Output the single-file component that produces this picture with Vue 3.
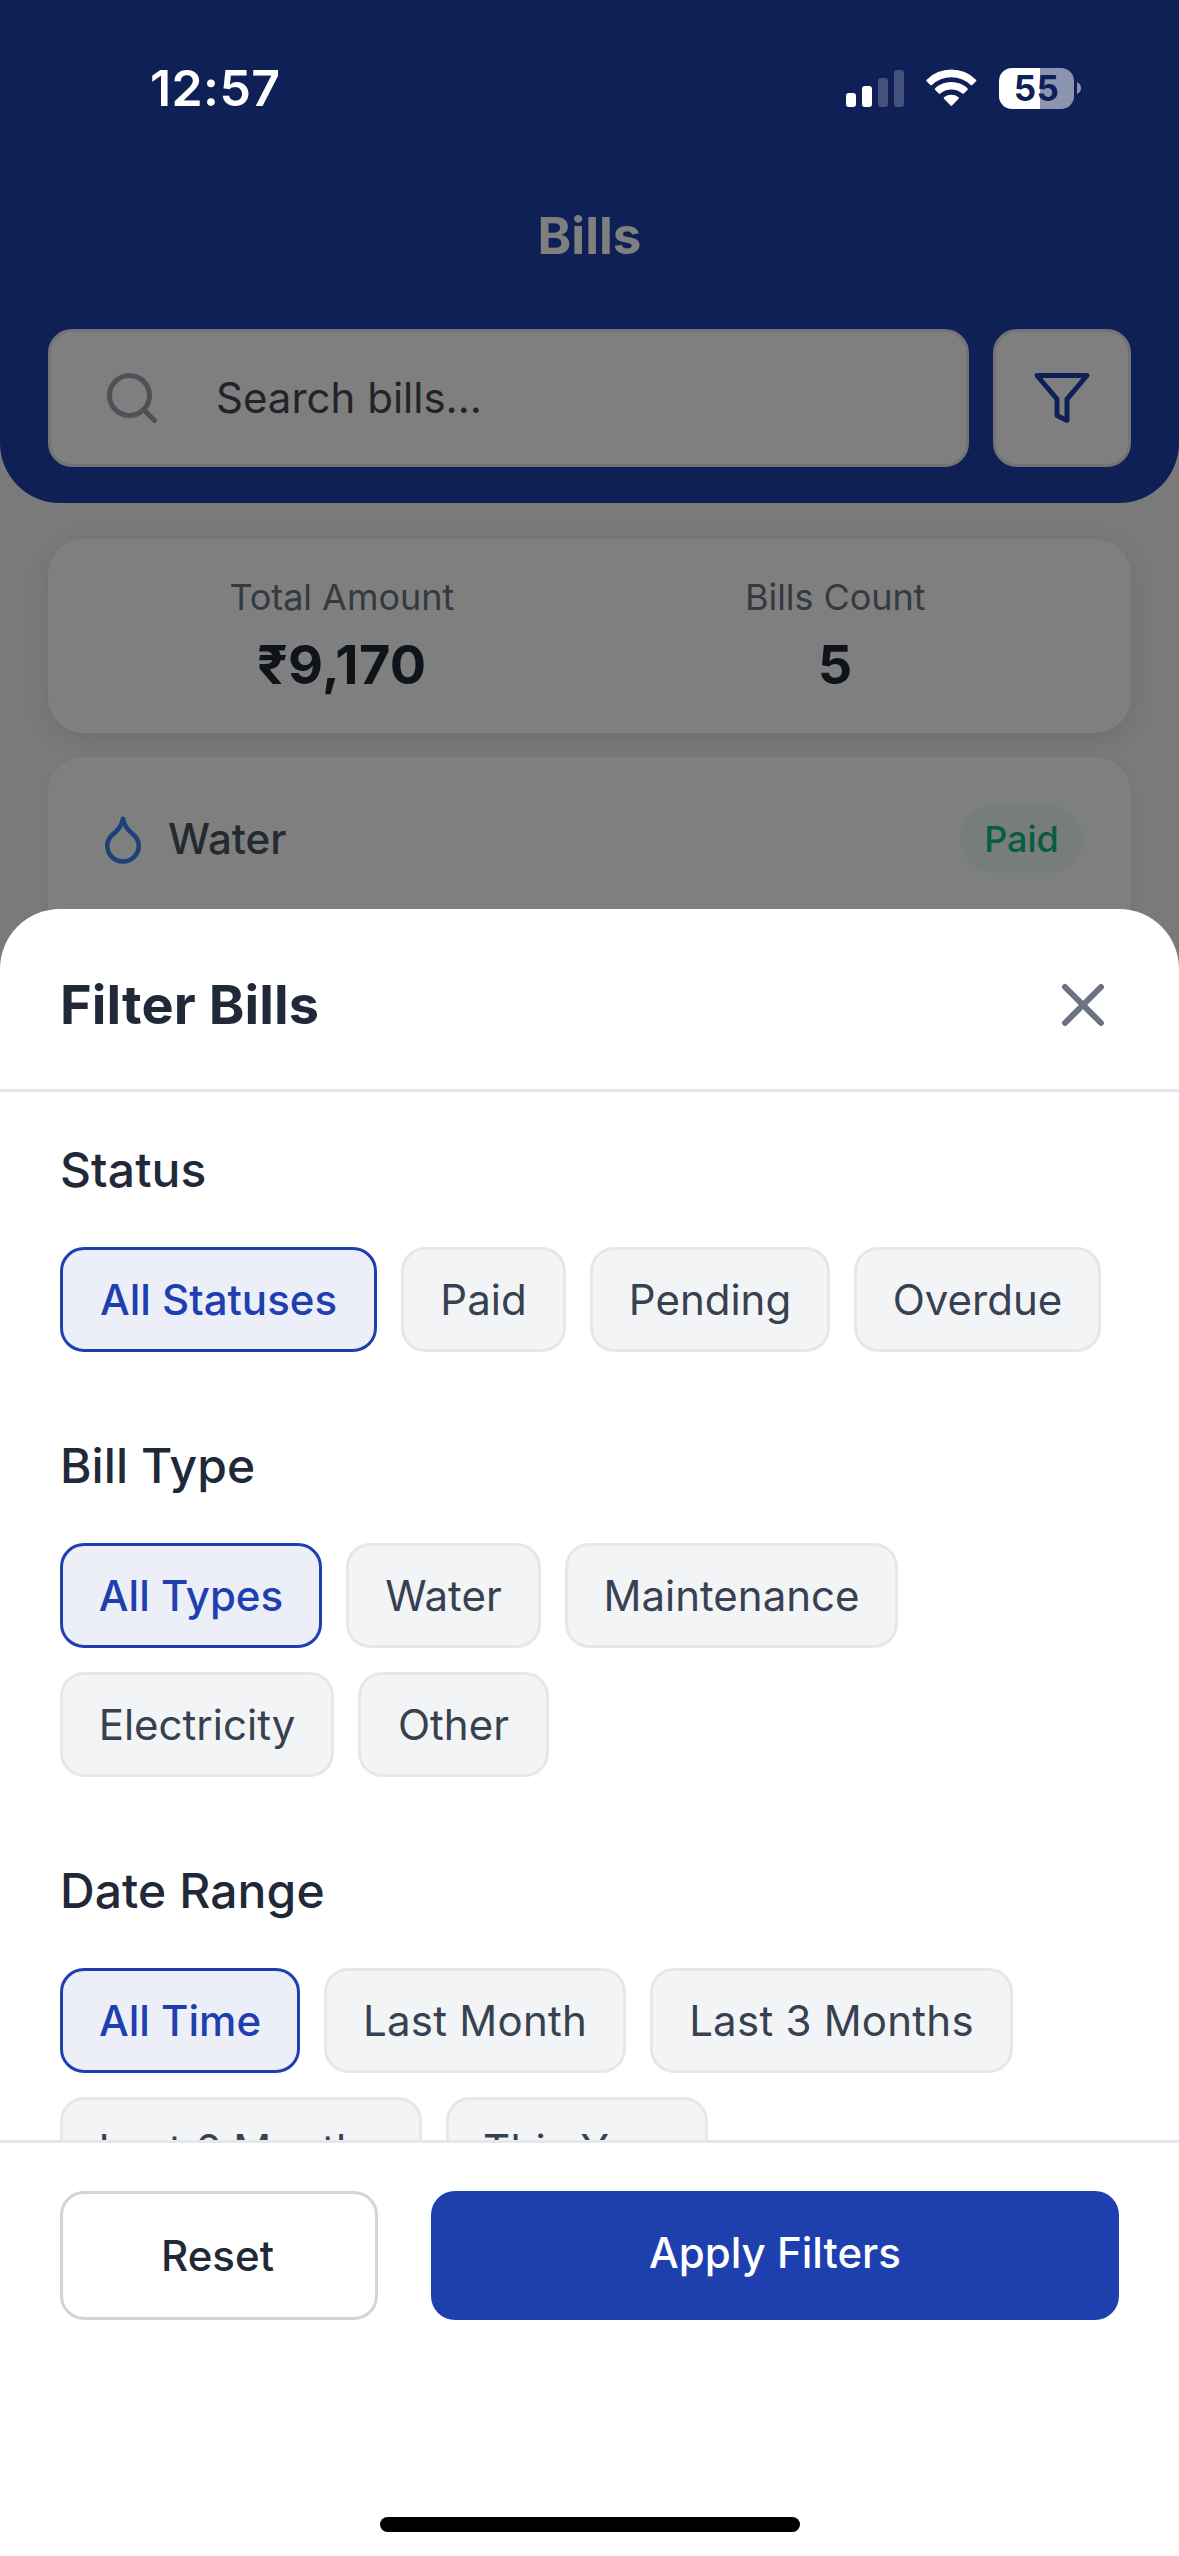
<script setup>
import { ref } from 'vue'

const groups = ref([
  {
    title: 'Status',
    selected: 'All Statuses',
    options: [
      { label: 'All Statuses', width: 317 },
      { label: 'Paid', width: 165 },
      { label: 'Pending', width: 240 },
      { label: 'Overdue', width: 247 },
    ],
  },
  {
    title: 'Bill Type',
    selected: 'All Types',
    options: [
      { label: 'All Types', width: 262 },
      { label: 'Water', width: 195 },
      { label: 'Maintenance', width: 333 },
      { label: 'Electricity', width: 274 },
      { label: 'Other', width: 191 },
    ],
  },
  {
    title: 'Date Range',
    selected: 'All Time',
    loose: true,
    options: [
      { label: 'All Time', width: 240 },
      { label: 'Last Month', width: 302 },
      { label: 'Last 3 Months', width: 363 },
      { label: 'Last 6 Months', width: 362 },
      { label: 'This Year', width: 262 },
    ],
  },
])

const summary = [
  { label: 'Total Amount', value: '₹9,170' },
  { label: 'Bills Count', value: '5' },
]
</script>

<template>
  <div class="screen">
    <div class="page">
      <header class="top">
        <h1 class="heading">Bills</h1>
        <div class="search-row">
          <div class="search">
            <svg class="search-icon" viewBox="0 0 24 24">
              <circle cx="11" cy="11" r="8" />
              <path d="M21 21l-4.35-4.35" />
            </svg>
            <span class="placeholder">Search bills...</span>
          </div>
          <button class="filter-button">
            <svg class="filter-icon" viewBox="0 0 24 24">
              <path d="M22 3H2l8 9.46V19l4 2v-8.54L22 3z" />
            </svg>
          </button>
        </div>
      </header>

      <section class="card summary">
        <div v-for="item in summary" :key="item.label" class="metric">
          <span class="metric-label">{{ item.label }}</span>
          <span class="metric-value">{{ item.value }}</span>
        </div>
      </section>

      <section class="card bill">
        <svg class="drop-icon" viewBox="0 0 24 24">
          <path d="M12 22a7 7 0 0 0 7-7c0-2-1-3.9-3-5.5s-3.5-4-4-6.5c-.5 2.5-2 4.9-4 6.5C6 11.1 5 13 5 15a7 7 0 0 0 7 7z" />
        </svg>
        <span class="bill-name">Water</span>
        <span class="badge">Paid</span>
      </section>
    </div>

    <div class="backdrop"></div>

    <div class="status-bar">
      <span class="clock">12:57</span>
      <div class="indicators">
        <svg class="signal" viewBox="0 0 58 37">
          <rect x="0" y="23" width="10" height="14" rx="3" />
          <rect x="16" y="16" width="10" height="21" rx="3" />
          <rect class="dim" x="32" y="8" width="10" height="29" rx="3" />
          <rect class="dim" x="48" y="0" width="10" height="37" rx="3" />
        </svg>
        <svg class="wifi" viewBox="0 0 51 38">
          <path d="M.7 10.7A34.5 34.5 0 0 1 49.9 10.7Q50.8 11.5 50 12.3L46.3 16Q45.5 16.7 44.7 16A28 28 0 0 0 5.9 16Q5.1 16.7 4.3 16L.6 12.3Q-.2 11.5 .7 10.7Z" />
          <path d="M9.2 19.3A23.5 23.5 0 0 1 41.4 19.3Q42.2 20.1 41.4 20.9L37.8 24.5Q37 25.2 36.2 24.5A16.5 16.5 0 0 0 14.4 24.5Q13.6 25.2 12.8 24.5L9.2 20.9Q8.4 20.1 9.2 19.3Z" />
          <path d="M18 28.3A12 12 0 0 1 32.6 28.3Q33.4 29 32.6 29.8L26.1 36.6Q25.3 37.3 24.5 36.6L18 29.8Q17.2 29 18 28.3Z" />
        </svg>
        <div class="battery">
          <span class="battery-level">55</span>
        </div>
        <svg class="nub" viewBox="0 0 4 12">
          <path d="M0 0Q4 2 4 6T0 12Z" />
        </svg>
      </div>
    </div>

    <div class="sheet">
      <div class="sheet-head">
        <h2 class="sheet-title">Filter Bills</h2>
        <svg class="close-icon" viewBox="0 0 24 24">
          <path d="M18 6L6 18M6 6l12 12" />
        </svg>
      </div>

      <div class="sheet-body">
        <section v-for="group in groups" :key="group.title" class="group" :class="{ loose: group.loose }">
          <h3 class="group-title">{{ group.title }}</h3>
          <div class="chips">
            <button
              v-for="option in group.options"
              :key="option.label"
              class="chip"
              :class="{ active: option.label === group.selected }"
              :style="{ width: option.width + 'px' }"
              @click="group.selected = option.label"
            >{{ option.label }}</button>
          </div>
        </section>
      </div>

      <div class="sheet-foot">
        <button class="reset">Reset</button>
        <button class="apply">Apply Filters</button>
      </div>
      <div class="home-indicator"></div>
    </div>
  </div>
</template>

<style>
body {
  margin: 0;
}
</style>

<style scoped>
.screen {
  position: relative;
  width: 1179px;
  height: 2556px;
  overflow: hidden;
  background: #f4f4f5;
  font-family: Inter, "Liberation Sans", sans-serif;
}
h1, h2, h3 {
  margin: 0;
}
button {
  margin: 0;
  padding: 0;
  border: 0;
  font: inherit;
}
svg {
  display: block;
  flex: none;
}

.page {
  display: flex;
  flex-direction: column;
}
.top {
  display: flex;
  flex-direction: column;
  box-sizing: border-box;
  height: 503px;
  padding: 205px 48px 36px;
  background: #1e40af;
  border-radius: 0 0 60px 60px;
}
.heading {
  height: 124px;
  line-height: 62px;
  text-align: center;
  font-size: 51px;
  font-weight: 700;
  color: #fff;
}
.search-row {
  display: flex;
  gap: 24px;
  height: 138px;
}
.search,
.filter-button {
  display: flex;
  align-items: center;
  box-sizing: border-box;
  background: #fff;
  border: 3px solid #e5e7eb;
  border-radius: 24px;
}
.search {
  flex: 1;
  padding-left: 51px;
}
.search-icon,
.filter-icon {
  width: 60px;
  height: 60px;
  fill: none;
  stroke-width: 2;
  stroke-linecap: round;
  stroke-linejoin: round;
}
.search-icon {
  stroke: #9ca3af;
}
.filter-icon {
  stroke: #1e40af;
}
.placeholder {
  margin: 0 0 2px 54px;
  font-size: 42px;
  color: #49454f;
}
.filter-button {
  justify-content: center;
  width: 138px;
}

.card {
  display: flex;
  box-sizing: border-box;
  margin: 0 48px;
  background: #fff;
  border-radius: 36px;
}
.summary {
  height: 194px;
  margin-top: 36px;
  padding: 36px 49px 36px 47px;
  box-shadow: 0 6px 24px rgba(0, 0, 0, 0.1);
}
.metric {
  flex: 1;
  display: flex;
  flex-direction: column;
  align-items: center;
  gap: 13px;
}
.metric-label {
  font-size: 36px;
  line-height: 44px;
  letter-spacing: -0.05px;
  color: #6b7280;
}
.metric-value {
  font-size: 54px;
  line-height: 65px;
  font-weight: 700;
  letter-spacing: 0.3px;
  color: #1f2937;
}
.bill {
  align-items: flex-start;
  height: 400px;
  margin-top: 24px;
  padding: 48px;
  box-shadow: 0 3px 12px rgba(0, 0, 0, 0.05);
}
.drop-icon {
  width: 54px;
  height: 54px;
  margin-top: 7px;
  fill: none;
  stroke: #3b82f6;
  stroke-width: 2;
  stroke-linecap: round;
  stroke-linejoin: round;
}
.bill-name {
  flex: 1;
  margin-left: 18px;
  font-size: 42px;
  line-height: 67px;
  font-weight: 500;
  color: #4b5563;
}
.badge {
  box-sizing: border-box;
  width: 123px;
  height: 68px;
  line-height: 68px;
  border-radius: 34px;
  text-align: center;
  background: rgba(16, 185, 129, 0.08);
  color: #10b981;
  font-size: 36px;
  font-weight: 500;
}

.backdrop {
  position: absolute;
  inset: 0;
  background: rgba(0, 0, 0, 0.5);
}

.status-bar {
  position: absolute;
  top: 0;
  left: 0;
  right: 0;
  display: flex;
  justify-content: space-between;
  align-items: center;
  box-sizing: border-box;
  height: 176px;
  padding: 0 98px 0 150px;
}
.clock {
  font-size: 50px;
  letter-spacing: 0.4px;
  font-weight: 600;
  color: #fff;
}
.indicators {
  display: flex;
  align-items: center;
}
.signal {
  width: 58px;
  height: 37px;
  fill: #fff;
}
.dim {
  opacity: 0.22;
}
.wifi {
  width: 51px;
  height: 38px;
  margin-left: 22px;
  fill: #fff;
}
.battery {
  display: flex;
  align-items: center;
  justify-content: center;
  width: 75px;
  height: 41px;
  margin-left: 22px;
  border-radius: 13px;
  background: linear-gradient(90deg, #fff 41px, rgba(255, 255, 255, 0.52) 41px);
}
.battery-level {
  font-size: 35px;
  line-height: 41px;
  font-weight: 700;
  letter-spacing: 0.4px;
  color: #0f2058;
}
.nub {
  width: 4px;
  height: 12px;
  margin-left: 3px;
  fill: rgba(255, 255, 255, 0.52);
}

.sheet {
  position: absolute;
  top: 909px;
  left: 0;
  right: 0;
  bottom: 0;
  display: flex;
  flex-direction: column;
  background: #fff;
  border-radius: 60px 60px 0 0;
}
.sheet-head {
  display: flex;
  justify-content: space-between;
  align-items: center;
  padding: 60px 60px 48px;
  border-bottom: 3px solid #e5e7eb;
}
.sheet-title {
  font-size: 54px;
  line-height: 72px;
  font-weight: 700;
  letter-spacing: 0.1px;
  color: #1f2937;
}
.close-icon {
  width: 72px;
  height: 72px;
  fill: none;
  stroke: #6b7280;
  stroke-width: 2;
  stroke-linecap: round;
}
.sheet-body {
  display: flex;
  flex-direction: column;
  gap: 84px;
  box-sizing: border-box;
  height: 1048px;
  padding: 48px 60px 0;
  overflow: hidden;
}
.group {
  flex: none;
}
.group-title {
  margin-bottom: 48px;
  font-size: 48px;
  line-height: 59px;
  font-weight: 500;
  letter-spacing: 0.1px;
  color: #1f2937;
}
.chips {
  display: flex;
  flex-wrap: wrap;
  gap: 24px;
}
.chip {
  box-sizing: border-box;
  height: 105px;
  border: 3px solid #e5e7eb;
  border-radius: 24px;
  background: #f3f4f6;
  color: #374151;
  font-size: 42px;
  white-space: nowrap;
}
.loose .chip:not(.active) {
  letter-spacing: 0.25px;
}
.chip.active {
  border-color: #1e40af;
  background: #eceff8;
  color: #1e40af;
  font-weight: 500;
}
.sheet-foot {
  display: flex;
  gap: 53px;
  padding: 48px 60px 0;
  border-top: 3px solid #e5e7eb;
}
.reset,
.apply {
  box-sizing: border-box;
  height: 129px;
  border-radius: 24px;
  font-size: 42px;
  font-weight: 500;
}
.reset {
  width: 318px;
  padding-right: 3px;
  border: 3px solid #d1d5db;
  background: #fff;
  color: #1f2937;
}
.apply {
  flex: 1;
  padding-bottom: 6px;
  background: #1e40af;
  color: #fff;
}
.home-indicator {
  align-self: center;
  width: 420px;
  height: 15px;
  margin-top: 197px;
  border-radius: 8px;
  background: #000;
}
</style>
